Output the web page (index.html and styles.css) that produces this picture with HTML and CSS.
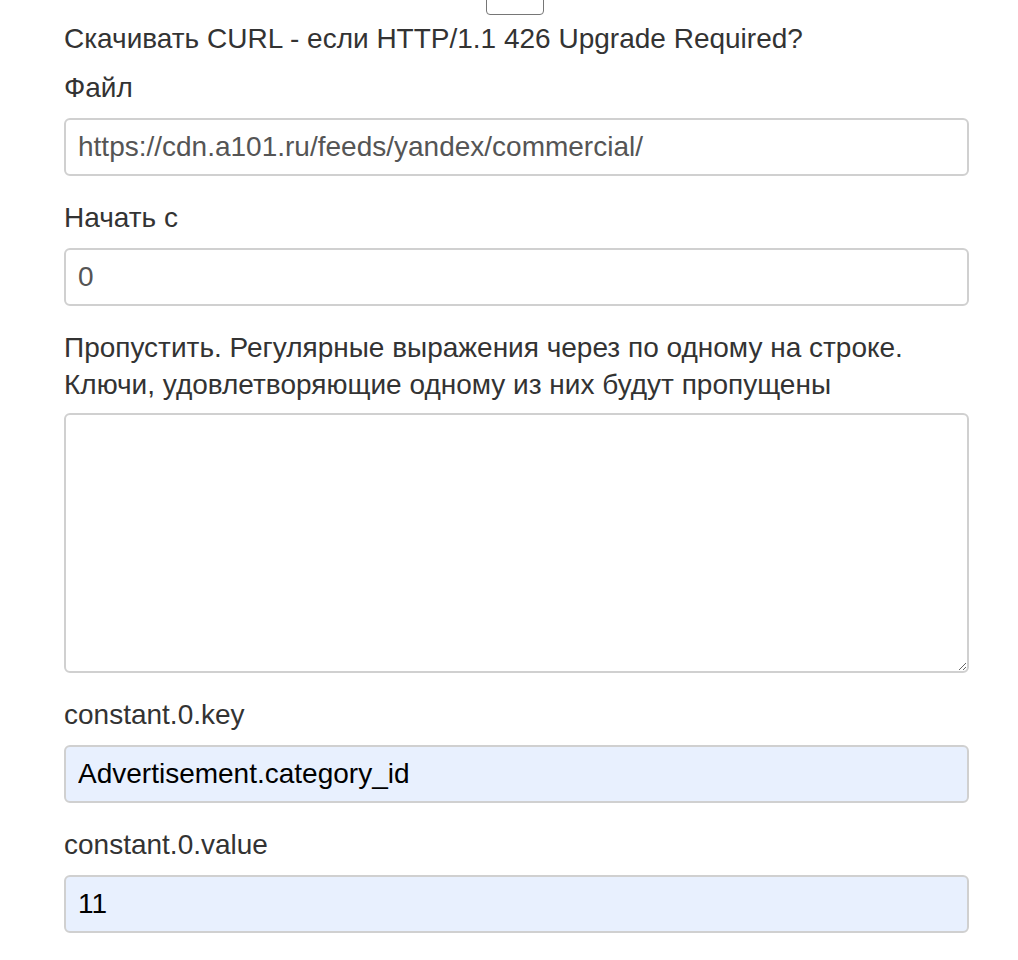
FILE: index.html
```html
<!DOCTYPE html>
<html lang="ru">
<head>
<meta charset="utf-8">
<link rel="stylesheet" href="styles.css">
</head>
<body>
<div class="page">
  <div class="top-stub"><div class="stub-box"></div></div>
  <div class="form-group first">
    <label class="label">Скачивать CURL - если HTTP/1.1 426 Upgrade Required?</label>
  </div>
  <div class="form-group">
    <label class="label">Файл</label>
    <input class="form-control" type="text" value="https://cdn.a101.ru/feeds/yandex/commercial/">
  </div>
  <div class="form-group">
    <label class="label">Начать с</label>
    <input class="form-control" type="text" value="0">
  </div>
  <div class="form-group skip">
    <label class="label">Пропустить. Регулярные выражения через по одному на строке.<br>Ключи, удовлетворяющие одному из них будут пропущены</label>
    <textarea class="form-control textarea"></textarea>
  </div>
  <div class="form-group">
    <label class="label">constant.0.key</label>
    <input class="form-control autofill" type="text" value="Advertisement.category_id">
  </div>
  <div class="form-group">
    <label class="label">constant.0.value</label>
    <input class="form-control autofill" type="text" value="11">
  </div>
</div>
</body>
</html>
```
FILE: styles.css
```css
html, body {
  margin: 0;
  padding: 0;
  background: #fff;
}
body {
  font-family: "Liberation Sans", Arial, Helvetica, sans-serif;
  font-size: 28px;
  line-height: 37px;
  color: #333;
}
.page {
  width: 905px;
  margin-left: 64px;
}
.top-stub {
  height: 15px;
  position: relative;
}
.stub-box {
  position: absolute;
  left: 422px;
  top: -19px;
  width: 56px;
  height: 32px;
  border: 1px solid #767676;
  border-radius: 4px;
}
.label {
  display: block;
  margin-bottom: 12px;
}
.first .label {
  margin-top: 5px;
  margin-bottom: 12px;
}
.skip .label {
  margin-top: 6px;
  margin-bottom: 10px;
}
.form-control {
  display: block;
  box-sizing: border-box;
  width: 100%;
  height: 58px;
  margin: 0 0 23px 0;
  padding: 0 12px;
  font-family: "Liberation Sans", Arial, Helvetica, sans-serif;
  font-size: 28px;
  color: #555;
  background: #fff;
  border: 2px solid #d0d0d0;
  border-radius: 6px;
  outline: none;
}
.textarea {
  height: 260px;
  resize: vertical;
  padding: 10px 12px;
}
.autofill {
  background: #e8f0fe;
  color: #000;
}
```
